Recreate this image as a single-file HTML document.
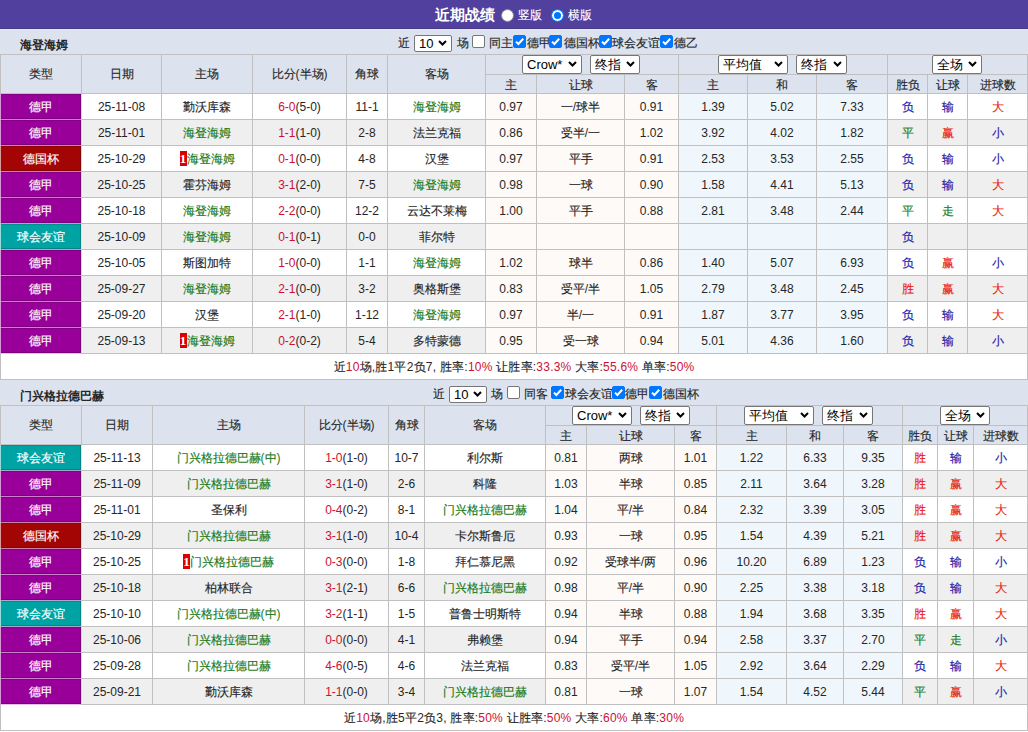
<!DOCTYPE html>
<html><head><meta charset="utf-8"><style>
html,body{margin:0;padding:0;}
body{width:1028px;height:732px;position:relative;overflow:hidden;background:#dce3ee;font-family:"Liberation Sans",sans-serif;font-size:12px;color:#262626;}
.a{position:absolute;}
.t{position:absolute;text-align:center;white-space:nowrap;}
.c{-webkit-text-stroke:0.15px currentColor;}
.sel{position:absolute;background:#fff;border:1px solid #767676;border-radius:2px;font-size:13px;color:#000;}
.sel span{position:absolute;left:4px;top:0;}
.sel svg{position:absolute;}
.cb{position:absolute;width:11px;height:11px;border:1px solid #767676;border-radius:2px;background:#fff;}
.cb.on{background:#0075ff;border-color:#0075ff;}
.cb svg{position:absolute;left:-1px;top:-1px;}
.rd{position:absolute;width:11px;height:11px;border-radius:50%;background:#fff;border:1px solid #888;}
.rd.on{background:#fff;border:1px solid #0075ff;box-shadow:inset 0 0 0 2px #fff,inset 0 0 0 6px #0075ff;}
.bd{display:inline-block;background:#dd0000;color:#fff;font-weight:bold;font-family:"Liberation Serif",serif;font-size:13px;width:7px;line-height:15px;height:15px;text-align:center;vertical-align:middle;margin-right:0px;position:relative;top:-1px;}
</style></head><body>
<div class="a" style="left:0px;top:0px;width:1028px;height:29px;background:#51409d;"></div>
<div class="a" style="left:0px;top:28px;width:1028px;height:1px;background:#483a86;"></div>
<div class="a" style="left:0px;top:29px;width:1028px;height:1px;background:#e6e6fa;"></div>
<div class="t" style="left:435px;top:4px;width:70px;height:22px;line-height:22px;color:#fff;font-weight:bold;font-size:15px;text-align:left;">近期战绩</div>
<div class="rd" style="left:501px;top:9px"></div>
<div class="t" style="left:518px;top:4px;width:30px;height:22px;line-height:22px;color:#fff;text-align:left;"><span class="c">竖版</span></div>
<div class="rd on" style="left:551px;top:9px"></div>
<div class="t" style="left:568px;top:4px;width:30px;height:22px;line-height:22px;color:#fff;text-align:left;"><span class="c">横版</span></div>
<div class="t" style="left:20px;top:35px;width:200px;height:20px;line-height:20px;font-weight:bold;text-align:left;">海登海姆</div>
<div class="t" style="left:398px;top:35px;width:120px;height:16px;line-height:16px;text-align:left;width:auto;"><span class="c">近</span></div>
<div class="sel" style="left:414px;top:35px;width:36px;height:15px;line-height:15px;"><span style="font-family:"Liberation Serif",serif;font-size:13px;">10</span><svg style="right:4px;top:4px" width="9" height="6" viewBox="0 0 9 6"><path d="M1 1 L4.5 4.5 L8 1" fill="none" stroke="#000" stroke-width="2"/></svg></div>
<div class="t" style="left:457px;top:35px;width:120px;height:16px;line-height:16px;text-align:left;width:auto;"><span class="c">场</span></div>
<div class="cb" style="left:472px;top:35px"></div>
<div class="t" style="left:489px;top:35px;width:120px;height:16px;line-height:16px;text-align:left;width:auto;"><span class="c">同主</span></div>
<div class="cb on" style="left:513px;top:35px"><svg width="13" height="13" viewBox="0 0 13 13"><path d="M3 6.6 L5.4 9 L10.2 3.8" fill="none" stroke="#fff" stroke-width="2"/></svg></div>
<div class="t" style="left:527px;top:35px;width:120px;height:16px;line-height:16px;text-align:left;width:auto;"><span class="c">德甲</span></div>
<div class="cb on" style="left:549px;top:35px"><svg width="13" height="13" viewBox="0 0 13 13"><path d="M3 6.6 L5.4 9 L10.2 3.8" fill="none" stroke="#fff" stroke-width="2"/></svg></div>
<div class="t" style="left:564px;top:35px;width:120px;height:16px;line-height:16px;text-align:left;width:auto;"><span class="c">德国杯</span></div>
<div class="cb on" style="left:599px;top:35px"><svg width="13" height="13" viewBox="0 0 13 13"><path d="M3 6.6 L5.4 9 L10.2 3.8" fill="none" stroke="#fff" stroke-width="2"/></svg></div>
<div class="t" style="left:612px;top:35px;width:120px;height:16px;line-height:16px;text-align:left;width:auto;"><span class="c">球会友谊</span></div>
<div class="cb on" style="left:660px;top:35px"><svg width="13" height="13" viewBox="0 0 13 13"><path d="M3 6.6 L5.4 9 L10.2 3.8" fill="none" stroke="#fff" stroke-width="2"/></svg></div>
<div class="t" style="left:674px;top:35px;width:120px;height:16px;line-height:16px;text-align:left;width:auto;"><span class="c">德乙</span></div>
<div class="a" style="left:0px;top:54px;width:1028px;height:326px;background:#c0c0c0;"></div>
<div class="a" style="left:1px;top:55px;width:80px;height:38px;background:#dce3ee;"></div>
<div class="a" style="left:82px;top:55px;width:79px;height:38px;background:#dce3ee;"></div>
<div class="a" style="left:162px;top:55px;width:90px;height:38px;background:#dce3ee;"></div>
<div class="a" style="left:253px;top:55px;width:93px;height:38px;background:#dce3ee;"></div>
<div class="a" style="left:347px;top:55px;width:40px;height:38px;background:#dce3ee;"></div>
<div class="a" style="left:388px;top:55px;width:97px;height:38px;background:#dce3ee;"></div>
<div class="a" style="left:486px;top:75px;width:50px;height:18px;background:#dce3ee;"></div>
<div class="a" style="left:537px;top:75px;width:87px;height:18px;background:#dce3ee;"></div>
<div class="a" style="left:625px;top:75px;width:53px;height:18px;background:#dce3ee;"></div>
<div class="a" style="left:679px;top:75px;width:68px;height:18px;background:#dce3ee;"></div>
<div class="a" style="left:748px;top:75px;width:68px;height:18px;background:#dce3ee;"></div>
<div class="a" style="left:817px;top:75px;width:70px;height:18px;background:#dce3ee;"></div>
<div class="a" style="left:888px;top:75px;width:39px;height:18px;background:#dce3ee;"></div>
<div class="a" style="left:928px;top:75px;width:39px;height:18px;background:#dce3ee;"></div>
<div class="a" style="left:968px;top:75px;width:59px;height:18px;background:#dce3ee;"></div>
<div class="a" style="left:486px;top:55px;width:192px;height:19px;background:#dce3ee;"></div>
<div class="a" style="left:679px;top:55px;width:208px;height:19px;background:#dce3ee;"></div>
<div class="a" style="left:888px;top:55px;width:139px;height:19px;background:#dce3ee;"></div>
<div class="t" style="left:1px;top:55px;width:80px;height:38px;line-height:38px;"><span class="c">类型</span></div>
<div class="t" style="left:82px;top:55px;width:79px;height:38px;line-height:38px;"><span class="c">日期</span></div>
<div class="t" style="left:162px;top:55px;width:90px;height:38px;line-height:38px;"><span class="c">主场</span></div>
<div class="t" style="left:253px;top:55px;width:93px;height:38px;line-height:38px;"><span class="c">比分</span>(<span class="c">半场</span>)</div>
<div class="t" style="left:347px;top:55px;width:40px;height:38px;line-height:38px;"><span class="c">角球</span></div>
<div class="t" style="left:388px;top:55px;width:97px;height:38px;line-height:38px;"><span class="c">客场</span></div>
<div class="t" style="left:486px;top:76px;width:50px;height:18px;line-height:18px;"><span class="c">主</span></div>
<div class="t" style="left:537px;top:76px;width:87px;height:18px;line-height:18px;"><span class="c">让球</span></div>
<div class="t" style="left:625px;top:76px;width:53px;height:18px;line-height:18px;"><span class="c">客</span></div>
<div class="t" style="left:679px;top:76px;width:68px;height:18px;line-height:18px;"><span class="c">主</span></div>
<div class="t" style="left:748px;top:76px;width:68px;height:18px;line-height:18px;"><span class="c">和</span></div>
<div class="t" style="left:817px;top:76px;width:70px;height:18px;line-height:18px;"><span class="c">客</span></div>
<div class="t" style="left:888px;top:76px;width:39px;height:18px;line-height:18px;"><span class="c">胜负</span></div>
<div class="t" style="left:928px;top:76px;width:39px;height:18px;line-height:18px;"><span class="c">让球</span></div>
<div class="t" style="left:968px;top:76px;width:59px;height:18px;line-height:18px;"><span class="c">进球数</span></div>
<div class="sel" style="left:522px;top:55px;width:58px;height:17px;line-height:17px;"><span style="">Crow*</span><svg style="right:4px;top:5px" width="9" height="6" viewBox="0 0 9 6"><path d="M1 1 L4.5 4.5 L8 1" fill="none" stroke="#000" stroke-width="2"/></svg></div>
<div class="sel" style="left:590px;top:55px;width:48px;height:17px;line-height:17px;"><span style="">终指</span><svg style="right:4px;top:5px" width="9" height="6" viewBox="0 0 9 6"><path d="M1 1 L4.5 4.5 L8 1" fill="none" stroke="#000" stroke-width="2"/></svg></div>
<div class="sel" style="left:718px;top:55px;width:68px;height:17px;line-height:17px;"><span style="">平均值</span><svg style="right:4px;top:5px" width="9" height="6" viewBox="0 0 9 6"><path d="M1 1 L4.5 4.5 L8 1" fill="none" stroke="#000" stroke-width="2"/></svg></div>
<div class="sel" style="left:796px;top:55px;width:49px;height:17px;line-height:17px;"><span style="">终指</span><svg style="right:4px;top:5px" width="9" height="6" viewBox="0 0 9 6"><path d="M1 1 L4.5 4.5 L8 1" fill="none" stroke="#000" stroke-width="2"/></svg></div>
<div class="sel" style="left:932px;top:55px;width:48px;height:17px;line-height:17px;"><span style="">全场</span><svg style="right:4px;top:5px" width="9" height="6" viewBox="0 0 9 6"><path d="M1 1 L4.5 4.5 L8 1" fill="none" stroke="#000" stroke-width="2"/></svg></div>
<div class="a" style="left:1px;top:94px;width:80px;height:25px;background:#990099;"></div>
<div class="a" style="left:82px;top:94px;width:79px;height:25px;background:#ffffff;"></div>
<div class="a" style="left:162px;top:94px;width:90px;height:25px;background:#ffffff;"></div>
<div class="a" style="left:253px;top:94px;width:93px;height:25px;background:#ffffff;"></div>
<div class="a" style="left:347px;top:94px;width:40px;height:25px;background:#ffffff;"></div>
<div class="a" style="left:388px;top:94px;width:97px;height:25px;background:#ffffff;"></div>
<div class="a" style="left:486px;top:94px;width:50px;height:25px;background:#fdfaf8;"></div>
<div class="a" style="left:537px;top:94px;width:87px;height:25px;background:#fdfaf8;"></div>
<div class="a" style="left:625px;top:94px;width:53px;height:25px;background:#fdfaf8;"></div>
<div class="a" style="left:679px;top:94px;width:68px;height:25px;background:#eff7fc;"></div>
<div class="a" style="left:748px;top:94px;width:68px;height:25px;background:#eff7fc;"></div>
<div class="a" style="left:817px;top:94px;width:70px;height:25px;background:#eff7fc;"></div>
<div class="a" style="left:888px;top:94px;width:39px;height:25px;background:#ffffff;"></div>
<div class="a" style="left:928px;top:94px;width:39px;height:25px;background:#ffffff;"></div>
<div class="a" style="left:968px;top:94px;width:59px;height:25px;background:#ffffff;"></div>
<div class="t" style="left:1px;top:95px;width:80px;height:25px;line-height:25px;color:#fff;"><span class="c">德甲</span></div>
<div class="t" style="left:82px;top:95px;width:79px;height:25px;line-height:25px;">25-11-08</div>
<div class="t" style="left:162px;top:95px;width:90px;height:25px;line-height:25px;"><span class="c">勤沃库森</span></div>
<div class="t" style="left:253px;top:95px;width:93px;height:25px;line-height:25px;"><span style="color:#cc1133">6-0</span>(5-0)</div>
<div class="t" style="left:347px;top:95px;width:40px;height:25px;line-height:25px;">11-1</div>
<div class="t" style="left:388px;top:95px;width:97px;height:25px;line-height:25px;color:#1a7a1a;"><span class="c">海登海姆</span></div>
<div class="t" style="left:486px;top:95px;width:50px;height:25px;line-height:25px;">0.97</div>
<div class="t" style="left:537px;top:95px;width:87px;height:25px;line-height:25px;"><span class="c">一</span>/<span class="c">球半</span></div>
<div class="t" style="left:625px;top:95px;width:53px;height:25px;line-height:25px;">0.91</div>
<div class="t" style="left:679px;top:95px;width:68px;height:25px;line-height:25px;">1.39</div>
<div class="t" style="left:748px;top:95px;width:68px;height:25px;line-height:25px;">5.02</div>
<div class="t" style="left:817px;top:95px;width:70px;height:25px;line-height:25px;">7.33</div>
<div class="t" style="left:888px;top:95px;width:39px;height:25px;line-height:25px;color:#1818a8;"><span class="c">负</span></div>
<div class="t" style="left:928px;top:95px;width:39px;height:25px;line-height:25px;color:#1818a8;"><span class="c">输</span></div>
<div class="t" style="left:968px;top:95px;width:59px;height:25px;line-height:25px;color:#e8200c;"><span class="c">大</span></div>
<div class="a" style="left:1px;top:120px;width:80px;height:25px;background:#990099;"></div>
<div class="a" style="left:82px;top:120px;width:79px;height:25px;background:#efefef;"></div>
<div class="a" style="left:162px;top:120px;width:90px;height:25px;background:#efefef;"></div>
<div class="a" style="left:253px;top:120px;width:93px;height:25px;background:#efefef;"></div>
<div class="a" style="left:347px;top:120px;width:40px;height:25px;background:#efefef;"></div>
<div class="a" style="left:388px;top:120px;width:97px;height:25px;background:#efefef;"></div>
<div class="a" style="left:486px;top:120px;width:50px;height:25px;background:#fdfaf8;"></div>
<div class="a" style="left:537px;top:120px;width:87px;height:25px;background:#fdfaf8;"></div>
<div class="a" style="left:625px;top:120px;width:53px;height:25px;background:#fdfaf8;"></div>
<div class="a" style="left:679px;top:120px;width:68px;height:25px;background:#eff7fc;"></div>
<div class="a" style="left:748px;top:120px;width:68px;height:25px;background:#eff7fc;"></div>
<div class="a" style="left:817px;top:120px;width:70px;height:25px;background:#eff7fc;"></div>
<div class="a" style="left:888px;top:120px;width:39px;height:25px;background:#efefef;"></div>
<div class="a" style="left:928px;top:120px;width:39px;height:25px;background:#efefef;"></div>
<div class="a" style="left:968px;top:120px;width:59px;height:25px;background:#efefef;"></div>
<div class="t" style="left:1px;top:121px;width:80px;height:25px;line-height:25px;color:#fff;"><span class="c">德甲</span></div>
<div class="t" style="left:82px;top:121px;width:79px;height:25px;line-height:25px;">25-11-01</div>
<div class="t" style="left:162px;top:121px;width:90px;height:25px;line-height:25px;color:#1a7a1a;"><span class="c">海登海姆</span></div>
<div class="t" style="left:253px;top:121px;width:93px;height:25px;line-height:25px;"><span style="color:#cc1133">1-1</span>(1-0)</div>
<div class="t" style="left:347px;top:121px;width:40px;height:25px;line-height:25px;">2-8</div>
<div class="t" style="left:388px;top:121px;width:97px;height:25px;line-height:25px;"><span class="c">法兰克福</span></div>
<div class="t" style="left:486px;top:121px;width:50px;height:25px;line-height:25px;">0.86</div>
<div class="t" style="left:537px;top:121px;width:87px;height:25px;line-height:25px;"><span class="c">受半</span>/<span class="c">一</span></div>
<div class="t" style="left:625px;top:121px;width:53px;height:25px;line-height:25px;">1.02</div>
<div class="t" style="left:679px;top:121px;width:68px;height:25px;line-height:25px;">3.92</div>
<div class="t" style="left:748px;top:121px;width:68px;height:25px;line-height:25px;">4.02</div>
<div class="t" style="left:817px;top:121px;width:70px;height:25px;line-height:25px;">1.82</div>
<div class="t" style="left:888px;top:121px;width:39px;height:25px;line-height:25px;color:#1a7a1a;"><span class="c">平</span></div>
<div class="t" style="left:928px;top:121px;width:39px;height:25px;line-height:25px;color:#e8200c;"><span class="c">赢</span></div>
<div class="t" style="left:968px;top:121px;width:59px;height:25px;line-height:25px;color:#1818a8;"><span class="c">小</span></div>
<div class="a" style="left:1px;top:146px;width:80px;height:25px;background:#a30505;"></div>
<div class="a" style="left:82px;top:146px;width:79px;height:25px;background:#ffffff;"></div>
<div class="a" style="left:162px;top:146px;width:90px;height:25px;background:#ffffff;"></div>
<div class="a" style="left:253px;top:146px;width:93px;height:25px;background:#ffffff;"></div>
<div class="a" style="left:347px;top:146px;width:40px;height:25px;background:#ffffff;"></div>
<div class="a" style="left:388px;top:146px;width:97px;height:25px;background:#ffffff;"></div>
<div class="a" style="left:486px;top:146px;width:50px;height:25px;background:#fdfaf8;"></div>
<div class="a" style="left:537px;top:146px;width:87px;height:25px;background:#fdfaf8;"></div>
<div class="a" style="left:625px;top:146px;width:53px;height:25px;background:#fdfaf8;"></div>
<div class="a" style="left:679px;top:146px;width:68px;height:25px;background:#eff7fc;"></div>
<div class="a" style="left:748px;top:146px;width:68px;height:25px;background:#eff7fc;"></div>
<div class="a" style="left:817px;top:146px;width:70px;height:25px;background:#eff7fc;"></div>
<div class="a" style="left:888px;top:146px;width:39px;height:25px;background:#ffffff;"></div>
<div class="a" style="left:928px;top:146px;width:39px;height:25px;background:#ffffff;"></div>
<div class="a" style="left:968px;top:146px;width:59px;height:25px;background:#ffffff;"></div>
<div class="t" style="left:1px;top:147px;width:80px;height:25px;line-height:25px;color:#fff;"><span class="c">德国杯</span></div>
<div class="t" style="left:82px;top:147px;width:79px;height:25px;line-height:25px;">25-10-29</div>
<div class="t" style="left:162px;top:147px;width:90px;height:25px;line-height:25px;color:#1a7a1a;"><b class="bd">1</b><span class="c">海登海姆</span></div>
<div class="t" style="left:253px;top:147px;width:93px;height:25px;line-height:25px;"><span style="color:#cc1133">0-1</span>(0-0)</div>
<div class="t" style="left:347px;top:147px;width:40px;height:25px;line-height:25px;">4-8</div>
<div class="t" style="left:388px;top:147px;width:97px;height:25px;line-height:25px;"><span class="c">汉堡</span></div>
<div class="t" style="left:486px;top:147px;width:50px;height:25px;line-height:25px;">0.97</div>
<div class="t" style="left:537px;top:147px;width:87px;height:25px;line-height:25px;"><span class="c">平手</span></div>
<div class="t" style="left:625px;top:147px;width:53px;height:25px;line-height:25px;">0.91</div>
<div class="t" style="left:679px;top:147px;width:68px;height:25px;line-height:25px;">2.53</div>
<div class="t" style="left:748px;top:147px;width:68px;height:25px;line-height:25px;">3.53</div>
<div class="t" style="left:817px;top:147px;width:70px;height:25px;line-height:25px;">2.55</div>
<div class="t" style="left:888px;top:147px;width:39px;height:25px;line-height:25px;color:#1818a8;"><span class="c">负</span></div>
<div class="t" style="left:928px;top:147px;width:39px;height:25px;line-height:25px;color:#1818a8;"><span class="c">输</span></div>
<div class="t" style="left:968px;top:147px;width:59px;height:25px;line-height:25px;color:#1818a8;"><span class="c">小</span></div>
<div class="a" style="left:1px;top:172px;width:80px;height:25px;background:#990099;"></div>
<div class="a" style="left:82px;top:172px;width:79px;height:25px;background:#efefef;"></div>
<div class="a" style="left:162px;top:172px;width:90px;height:25px;background:#efefef;"></div>
<div class="a" style="left:253px;top:172px;width:93px;height:25px;background:#efefef;"></div>
<div class="a" style="left:347px;top:172px;width:40px;height:25px;background:#efefef;"></div>
<div class="a" style="left:388px;top:172px;width:97px;height:25px;background:#efefef;"></div>
<div class="a" style="left:486px;top:172px;width:50px;height:25px;background:#fdfaf8;"></div>
<div class="a" style="left:537px;top:172px;width:87px;height:25px;background:#fdfaf8;"></div>
<div class="a" style="left:625px;top:172px;width:53px;height:25px;background:#fdfaf8;"></div>
<div class="a" style="left:679px;top:172px;width:68px;height:25px;background:#eff7fc;"></div>
<div class="a" style="left:748px;top:172px;width:68px;height:25px;background:#eff7fc;"></div>
<div class="a" style="left:817px;top:172px;width:70px;height:25px;background:#eff7fc;"></div>
<div class="a" style="left:888px;top:172px;width:39px;height:25px;background:#efefef;"></div>
<div class="a" style="left:928px;top:172px;width:39px;height:25px;background:#efefef;"></div>
<div class="a" style="left:968px;top:172px;width:59px;height:25px;background:#efefef;"></div>
<div class="t" style="left:1px;top:173px;width:80px;height:25px;line-height:25px;color:#fff;"><span class="c">德甲</span></div>
<div class="t" style="left:82px;top:173px;width:79px;height:25px;line-height:25px;">25-10-25</div>
<div class="t" style="left:162px;top:173px;width:90px;height:25px;line-height:25px;"><span class="c">霍芬海姆</span></div>
<div class="t" style="left:253px;top:173px;width:93px;height:25px;line-height:25px;"><span style="color:#cc1133">3-1</span>(2-0)</div>
<div class="t" style="left:347px;top:173px;width:40px;height:25px;line-height:25px;">7-5</div>
<div class="t" style="left:388px;top:173px;width:97px;height:25px;line-height:25px;color:#1a7a1a;"><span class="c">海登海姆</span></div>
<div class="t" style="left:486px;top:173px;width:50px;height:25px;line-height:25px;">0.98</div>
<div class="t" style="left:537px;top:173px;width:87px;height:25px;line-height:25px;"><span class="c">一球</span></div>
<div class="t" style="left:625px;top:173px;width:53px;height:25px;line-height:25px;">0.90</div>
<div class="t" style="left:679px;top:173px;width:68px;height:25px;line-height:25px;">1.58</div>
<div class="t" style="left:748px;top:173px;width:68px;height:25px;line-height:25px;">4.41</div>
<div class="t" style="left:817px;top:173px;width:70px;height:25px;line-height:25px;">5.13</div>
<div class="t" style="left:888px;top:173px;width:39px;height:25px;line-height:25px;color:#1818a8;"><span class="c">负</span></div>
<div class="t" style="left:928px;top:173px;width:39px;height:25px;line-height:25px;color:#1818a8;"><span class="c">输</span></div>
<div class="t" style="left:968px;top:173px;width:59px;height:25px;line-height:25px;color:#e8200c;"><span class="c">大</span></div>
<div class="a" style="left:1px;top:198px;width:80px;height:25px;background:#990099;"></div>
<div class="a" style="left:82px;top:198px;width:79px;height:25px;background:#ffffff;"></div>
<div class="a" style="left:162px;top:198px;width:90px;height:25px;background:#ffffff;"></div>
<div class="a" style="left:253px;top:198px;width:93px;height:25px;background:#ffffff;"></div>
<div class="a" style="left:347px;top:198px;width:40px;height:25px;background:#ffffff;"></div>
<div class="a" style="left:388px;top:198px;width:97px;height:25px;background:#ffffff;"></div>
<div class="a" style="left:486px;top:198px;width:50px;height:25px;background:#fdfaf8;"></div>
<div class="a" style="left:537px;top:198px;width:87px;height:25px;background:#fdfaf8;"></div>
<div class="a" style="left:625px;top:198px;width:53px;height:25px;background:#fdfaf8;"></div>
<div class="a" style="left:679px;top:198px;width:68px;height:25px;background:#eff7fc;"></div>
<div class="a" style="left:748px;top:198px;width:68px;height:25px;background:#eff7fc;"></div>
<div class="a" style="left:817px;top:198px;width:70px;height:25px;background:#eff7fc;"></div>
<div class="a" style="left:888px;top:198px;width:39px;height:25px;background:#ffffff;"></div>
<div class="a" style="left:928px;top:198px;width:39px;height:25px;background:#ffffff;"></div>
<div class="a" style="left:968px;top:198px;width:59px;height:25px;background:#ffffff;"></div>
<div class="t" style="left:1px;top:199px;width:80px;height:25px;line-height:25px;color:#fff;"><span class="c">德甲</span></div>
<div class="t" style="left:82px;top:199px;width:79px;height:25px;line-height:25px;">25-10-18</div>
<div class="t" style="left:162px;top:199px;width:90px;height:25px;line-height:25px;color:#1a7a1a;"><span class="c">海登海姆</span></div>
<div class="t" style="left:253px;top:199px;width:93px;height:25px;line-height:25px;"><span style="color:#cc1133">2-2</span>(0-0)</div>
<div class="t" style="left:347px;top:199px;width:40px;height:25px;line-height:25px;">12-2</div>
<div class="t" style="left:388px;top:199px;width:97px;height:25px;line-height:25px;"><span class="c">云达不莱梅</span></div>
<div class="t" style="left:486px;top:199px;width:50px;height:25px;line-height:25px;">1.00</div>
<div class="t" style="left:537px;top:199px;width:87px;height:25px;line-height:25px;"><span class="c">平手</span></div>
<div class="t" style="left:625px;top:199px;width:53px;height:25px;line-height:25px;">0.88</div>
<div class="t" style="left:679px;top:199px;width:68px;height:25px;line-height:25px;">2.81</div>
<div class="t" style="left:748px;top:199px;width:68px;height:25px;line-height:25px;">3.48</div>
<div class="t" style="left:817px;top:199px;width:70px;height:25px;line-height:25px;">2.44</div>
<div class="t" style="left:888px;top:199px;width:39px;height:25px;line-height:25px;color:#1a7a1a;"><span class="c">平</span></div>
<div class="t" style="left:928px;top:199px;width:39px;height:25px;line-height:25px;color:#1a7a1a;"><span class="c">走</span></div>
<div class="t" style="left:968px;top:199px;width:59px;height:25px;line-height:25px;color:#e8200c;"><span class="c">大</span></div>
<div class="a" style="left:1px;top:224px;width:80px;height:25px;background:#00a3a3;"></div>
<div class="a" style="left:82px;top:224px;width:79px;height:25px;background:#efefef;"></div>
<div class="a" style="left:162px;top:224px;width:90px;height:25px;background:#efefef;"></div>
<div class="a" style="left:253px;top:224px;width:93px;height:25px;background:#efefef;"></div>
<div class="a" style="left:347px;top:224px;width:40px;height:25px;background:#efefef;"></div>
<div class="a" style="left:388px;top:224px;width:97px;height:25px;background:#efefef;"></div>
<div class="a" style="left:486px;top:224px;width:50px;height:25px;background:#fdfaf8;"></div>
<div class="a" style="left:537px;top:224px;width:87px;height:25px;background:#fdfaf8;"></div>
<div class="a" style="left:625px;top:224px;width:53px;height:25px;background:#fdfaf8;"></div>
<div class="a" style="left:679px;top:224px;width:68px;height:25px;background:#eff7fc;"></div>
<div class="a" style="left:748px;top:224px;width:68px;height:25px;background:#eff7fc;"></div>
<div class="a" style="left:817px;top:224px;width:70px;height:25px;background:#eff7fc;"></div>
<div class="a" style="left:888px;top:224px;width:39px;height:25px;background:#efefef;"></div>
<div class="a" style="left:928px;top:224px;width:39px;height:25px;background:#efefef;"></div>
<div class="a" style="left:968px;top:224px;width:59px;height:25px;background:#efefef;"></div>
<div class="t" style="left:1px;top:225px;width:80px;height:25px;line-height:25px;color:#fff;"><span class="c">球会友谊</span></div>
<div class="t" style="left:82px;top:225px;width:79px;height:25px;line-height:25px;">25-10-09</div>
<div class="t" style="left:162px;top:225px;width:90px;height:25px;line-height:25px;color:#1a7a1a;"><span class="c">海登海姆</span></div>
<div class="t" style="left:253px;top:225px;width:93px;height:25px;line-height:25px;"><span style="color:#cc1133">0-1</span>(0-1)</div>
<div class="t" style="left:347px;top:225px;width:40px;height:25px;line-height:25px;">0-0</div>
<div class="t" style="left:388px;top:225px;width:97px;height:25px;line-height:25px;"><span class="c">菲尔特</span></div>
<div class="t" style="left:888px;top:225px;width:39px;height:25px;line-height:25px;color:#1818a8;"><span class="c">负</span></div>
<div class="a" style="left:1px;top:250px;width:80px;height:25px;background:#990099;"></div>
<div class="a" style="left:82px;top:250px;width:79px;height:25px;background:#ffffff;"></div>
<div class="a" style="left:162px;top:250px;width:90px;height:25px;background:#ffffff;"></div>
<div class="a" style="left:253px;top:250px;width:93px;height:25px;background:#ffffff;"></div>
<div class="a" style="left:347px;top:250px;width:40px;height:25px;background:#ffffff;"></div>
<div class="a" style="left:388px;top:250px;width:97px;height:25px;background:#ffffff;"></div>
<div class="a" style="left:486px;top:250px;width:50px;height:25px;background:#fdfaf8;"></div>
<div class="a" style="left:537px;top:250px;width:87px;height:25px;background:#fdfaf8;"></div>
<div class="a" style="left:625px;top:250px;width:53px;height:25px;background:#fdfaf8;"></div>
<div class="a" style="left:679px;top:250px;width:68px;height:25px;background:#eff7fc;"></div>
<div class="a" style="left:748px;top:250px;width:68px;height:25px;background:#eff7fc;"></div>
<div class="a" style="left:817px;top:250px;width:70px;height:25px;background:#eff7fc;"></div>
<div class="a" style="left:888px;top:250px;width:39px;height:25px;background:#ffffff;"></div>
<div class="a" style="left:928px;top:250px;width:39px;height:25px;background:#ffffff;"></div>
<div class="a" style="left:968px;top:250px;width:59px;height:25px;background:#ffffff;"></div>
<div class="t" style="left:1px;top:251px;width:80px;height:25px;line-height:25px;color:#fff;"><span class="c">德甲</span></div>
<div class="t" style="left:82px;top:251px;width:79px;height:25px;line-height:25px;">25-10-05</div>
<div class="t" style="left:162px;top:251px;width:90px;height:25px;line-height:25px;"><span class="c">斯图加特</span></div>
<div class="t" style="left:253px;top:251px;width:93px;height:25px;line-height:25px;"><span style="color:#cc1133">1-0</span>(0-0)</div>
<div class="t" style="left:347px;top:251px;width:40px;height:25px;line-height:25px;">1-1</div>
<div class="t" style="left:388px;top:251px;width:97px;height:25px;line-height:25px;color:#1a7a1a;"><span class="c">海登海姆</span></div>
<div class="t" style="left:486px;top:251px;width:50px;height:25px;line-height:25px;">1.02</div>
<div class="t" style="left:537px;top:251px;width:87px;height:25px;line-height:25px;"><span class="c">球半</span></div>
<div class="t" style="left:625px;top:251px;width:53px;height:25px;line-height:25px;">0.86</div>
<div class="t" style="left:679px;top:251px;width:68px;height:25px;line-height:25px;">1.40</div>
<div class="t" style="left:748px;top:251px;width:68px;height:25px;line-height:25px;">5.07</div>
<div class="t" style="left:817px;top:251px;width:70px;height:25px;line-height:25px;">6.93</div>
<div class="t" style="left:888px;top:251px;width:39px;height:25px;line-height:25px;color:#1818a8;"><span class="c">负</span></div>
<div class="t" style="left:928px;top:251px;width:39px;height:25px;line-height:25px;color:#e8200c;"><span class="c">赢</span></div>
<div class="t" style="left:968px;top:251px;width:59px;height:25px;line-height:25px;color:#1818a8;"><span class="c">小</span></div>
<div class="a" style="left:1px;top:276px;width:80px;height:25px;background:#990099;"></div>
<div class="a" style="left:82px;top:276px;width:79px;height:25px;background:#efefef;"></div>
<div class="a" style="left:162px;top:276px;width:90px;height:25px;background:#efefef;"></div>
<div class="a" style="left:253px;top:276px;width:93px;height:25px;background:#efefef;"></div>
<div class="a" style="left:347px;top:276px;width:40px;height:25px;background:#efefef;"></div>
<div class="a" style="left:388px;top:276px;width:97px;height:25px;background:#efefef;"></div>
<div class="a" style="left:486px;top:276px;width:50px;height:25px;background:#fdfaf8;"></div>
<div class="a" style="left:537px;top:276px;width:87px;height:25px;background:#fdfaf8;"></div>
<div class="a" style="left:625px;top:276px;width:53px;height:25px;background:#fdfaf8;"></div>
<div class="a" style="left:679px;top:276px;width:68px;height:25px;background:#eff7fc;"></div>
<div class="a" style="left:748px;top:276px;width:68px;height:25px;background:#eff7fc;"></div>
<div class="a" style="left:817px;top:276px;width:70px;height:25px;background:#eff7fc;"></div>
<div class="a" style="left:888px;top:276px;width:39px;height:25px;background:#efefef;"></div>
<div class="a" style="left:928px;top:276px;width:39px;height:25px;background:#efefef;"></div>
<div class="a" style="left:968px;top:276px;width:59px;height:25px;background:#efefef;"></div>
<div class="t" style="left:1px;top:277px;width:80px;height:25px;line-height:25px;color:#fff;"><span class="c">德甲</span></div>
<div class="t" style="left:82px;top:277px;width:79px;height:25px;line-height:25px;">25-09-27</div>
<div class="t" style="left:162px;top:277px;width:90px;height:25px;line-height:25px;color:#1a7a1a;"><span class="c">海登海姆</span></div>
<div class="t" style="left:253px;top:277px;width:93px;height:25px;line-height:25px;"><span style="color:#cc1133">2-1</span>(0-0)</div>
<div class="t" style="left:347px;top:277px;width:40px;height:25px;line-height:25px;">3-2</div>
<div class="t" style="left:388px;top:277px;width:97px;height:25px;line-height:25px;"><span class="c">奥格斯堡</span></div>
<div class="t" style="left:486px;top:277px;width:50px;height:25px;line-height:25px;">0.83</div>
<div class="t" style="left:537px;top:277px;width:87px;height:25px;line-height:25px;"><span class="c">受平</span>/<span class="c">半</span></div>
<div class="t" style="left:625px;top:277px;width:53px;height:25px;line-height:25px;">1.05</div>
<div class="t" style="left:679px;top:277px;width:68px;height:25px;line-height:25px;">2.79</div>
<div class="t" style="left:748px;top:277px;width:68px;height:25px;line-height:25px;">3.48</div>
<div class="t" style="left:817px;top:277px;width:70px;height:25px;line-height:25px;">2.45</div>
<div class="t" style="left:888px;top:277px;width:39px;height:25px;line-height:25px;color:#e8200c;"><span class="c">胜</span></div>
<div class="t" style="left:928px;top:277px;width:39px;height:25px;line-height:25px;color:#e8200c;"><span class="c">赢</span></div>
<div class="t" style="left:968px;top:277px;width:59px;height:25px;line-height:25px;color:#e8200c;"><span class="c">大</span></div>
<div class="a" style="left:1px;top:302px;width:80px;height:25px;background:#990099;"></div>
<div class="a" style="left:82px;top:302px;width:79px;height:25px;background:#ffffff;"></div>
<div class="a" style="left:162px;top:302px;width:90px;height:25px;background:#ffffff;"></div>
<div class="a" style="left:253px;top:302px;width:93px;height:25px;background:#ffffff;"></div>
<div class="a" style="left:347px;top:302px;width:40px;height:25px;background:#ffffff;"></div>
<div class="a" style="left:388px;top:302px;width:97px;height:25px;background:#ffffff;"></div>
<div class="a" style="left:486px;top:302px;width:50px;height:25px;background:#fdfaf8;"></div>
<div class="a" style="left:537px;top:302px;width:87px;height:25px;background:#fdfaf8;"></div>
<div class="a" style="left:625px;top:302px;width:53px;height:25px;background:#fdfaf8;"></div>
<div class="a" style="left:679px;top:302px;width:68px;height:25px;background:#eff7fc;"></div>
<div class="a" style="left:748px;top:302px;width:68px;height:25px;background:#eff7fc;"></div>
<div class="a" style="left:817px;top:302px;width:70px;height:25px;background:#eff7fc;"></div>
<div class="a" style="left:888px;top:302px;width:39px;height:25px;background:#ffffff;"></div>
<div class="a" style="left:928px;top:302px;width:39px;height:25px;background:#ffffff;"></div>
<div class="a" style="left:968px;top:302px;width:59px;height:25px;background:#ffffff;"></div>
<div class="t" style="left:1px;top:303px;width:80px;height:25px;line-height:25px;color:#fff;"><span class="c">德甲</span></div>
<div class="t" style="left:82px;top:303px;width:79px;height:25px;line-height:25px;">25-09-20</div>
<div class="t" style="left:162px;top:303px;width:90px;height:25px;line-height:25px;"><span class="c">汉堡</span></div>
<div class="t" style="left:253px;top:303px;width:93px;height:25px;line-height:25px;"><span style="color:#cc1133">2-1</span>(1-0)</div>
<div class="t" style="left:347px;top:303px;width:40px;height:25px;line-height:25px;">1-12</div>
<div class="t" style="left:388px;top:303px;width:97px;height:25px;line-height:25px;color:#1a7a1a;"><span class="c">海登海姆</span></div>
<div class="t" style="left:486px;top:303px;width:50px;height:25px;line-height:25px;">0.97</div>
<div class="t" style="left:537px;top:303px;width:87px;height:25px;line-height:25px;"><span class="c">半</span>/<span class="c">一</span></div>
<div class="t" style="left:625px;top:303px;width:53px;height:25px;line-height:25px;">0.91</div>
<div class="t" style="left:679px;top:303px;width:68px;height:25px;line-height:25px;">1.87</div>
<div class="t" style="left:748px;top:303px;width:68px;height:25px;line-height:25px;">3.77</div>
<div class="t" style="left:817px;top:303px;width:70px;height:25px;line-height:25px;">3.95</div>
<div class="t" style="left:888px;top:303px;width:39px;height:25px;line-height:25px;color:#1818a8;"><span class="c">负</span></div>
<div class="t" style="left:928px;top:303px;width:39px;height:25px;line-height:25px;color:#1818a8;"><span class="c">输</span></div>
<div class="t" style="left:968px;top:303px;width:59px;height:25px;line-height:25px;color:#e8200c;"><span class="c">大</span></div>
<div class="a" style="left:1px;top:328px;width:80px;height:25px;background:#990099;"></div>
<div class="a" style="left:82px;top:328px;width:79px;height:25px;background:#efefef;"></div>
<div class="a" style="left:162px;top:328px;width:90px;height:25px;background:#efefef;"></div>
<div class="a" style="left:253px;top:328px;width:93px;height:25px;background:#efefef;"></div>
<div class="a" style="left:347px;top:328px;width:40px;height:25px;background:#efefef;"></div>
<div class="a" style="left:388px;top:328px;width:97px;height:25px;background:#efefef;"></div>
<div class="a" style="left:486px;top:328px;width:50px;height:25px;background:#fdfaf8;"></div>
<div class="a" style="left:537px;top:328px;width:87px;height:25px;background:#fdfaf8;"></div>
<div class="a" style="left:625px;top:328px;width:53px;height:25px;background:#fdfaf8;"></div>
<div class="a" style="left:679px;top:328px;width:68px;height:25px;background:#eff7fc;"></div>
<div class="a" style="left:748px;top:328px;width:68px;height:25px;background:#eff7fc;"></div>
<div class="a" style="left:817px;top:328px;width:70px;height:25px;background:#eff7fc;"></div>
<div class="a" style="left:888px;top:328px;width:39px;height:25px;background:#efefef;"></div>
<div class="a" style="left:928px;top:328px;width:39px;height:25px;background:#efefef;"></div>
<div class="a" style="left:968px;top:328px;width:59px;height:25px;background:#efefef;"></div>
<div class="t" style="left:1px;top:329px;width:80px;height:25px;line-height:25px;color:#fff;"><span class="c">德甲</span></div>
<div class="t" style="left:82px;top:329px;width:79px;height:25px;line-height:25px;">25-09-13</div>
<div class="t" style="left:162px;top:329px;width:90px;height:25px;line-height:25px;color:#1a7a1a;"><b class="bd">1</b><span class="c">海登海姆</span></div>
<div class="t" style="left:253px;top:329px;width:93px;height:25px;line-height:25px;"><span style="color:#cc1133">0-2</span>(0-2)</div>
<div class="t" style="left:347px;top:329px;width:40px;height:25px;line-height:25px;">5-4</div>
<div class="t" style="left:388px;top:329px;width:97px;height:25px;line-height:25px;"><span class="c">多特蒙德</span></div>
<div class="t" style="left:486px;top:329px;width:50px;height:25px;line-height:25px;">0.95</div>
<div class="t" style="left:537px;top:329px;width:87px;height:25px;line-height:25px;"><span class="c">受一球</span></div>
<div class="t" style="left:625px;top:329px;width:53px;height:25px;line-height:25px;">0.94</div>
<div class="t" style="left:679px;top:329px;width:68px;height:25px;line-height:25px;">5.01</div>
<div class="t" style="left:748px;top:329px;width:68px;height:25px;line-height:25px;">4.36</div>
<div class="t" style="left:817px;top:329px;width:70px;height:25px;line-height:25px;">1.60</div>
<div class="t" style="left:888px;top:329px;width:39px;height:25px;line-height:25px;color:#1818a8;"><span class="c">负</span></div>
<div class="t" style="left:928px;top:329px;width:39px;height:25px;line-height:25px;color:#1818a8;"><span class="c">输</span></div>
<div class="t" style="left:968px;top:329px;width:59px;height:25px;line-height:25px;color:#1818a8;"><span class="c">小</span></div>
<div class="a" style="left:81px;top:94px;width:1px;height:25px;background:#ebcceb;"></div>
<div class="a" style="left:0px;top:94px;width:1px;height:25px;background:#d699d6;"></div>
<div class="a" style="left:1px;top:119px;width:80px;height:1px;background:#cc80cc;"></div>
<div class="a" style="left:1px;top:94px;width:80px;height:25px;box-shadow:inset -1px -1px 0 rgba(0,0,0,0.18), inset 0 1px 0 rgba(0,0,0,0.12);"></div>
<div class="a" style="left:81px;top:120px;width:1px;height:25px;background:#ebcceb;"></div>
<div class="a" style="left:0px;top:120px;width:1px;height:25px;background:#d699d6;"></div>
<div class="a" style="left:1px;top:145px;width:80px;height:1px;background:#ce80a7;"></div>
<div class="a" style="left:1px;top:120px;width:80px;height:25px;box-shadow:inset -1px -1px 0 rgba(0,0,0,0.18), inset 0 1px 0 rgba(0,0,0,0.12);"></div>
<div class="a" style="left:81px;top:146px;width:1px;height:25px;background:#edcdcd;"></div>
<div class="a" style="left:0px;top:146px;width:1px;height:25px;background:#da9b9b;"></div>
<div class="a" style="left:1px;top:171px;width:80px;height:1px;background:#ce80a7;"></div>
<div class="a" style="left:1px;top:146px;width:80px;height:25px;box-shadow:inset -1px -1px 0 rgba(0,0,0,0.18), inset 0 1px 0 rgba(0,0,0,0.12);"></div>
<div class="a" style="left:81px;top:172px;width:1px;height:25px;background:#ebcceb;"></div>
<div class="a" style="left:0px;top:172px;width:1px;height:25px;background:#d699d6;"></div>
<div class="a" style="left:1px;top:197px;width:80px;height:1px;background:#cc80cc;"></div>
<div class="a" style="left:1px;top:172px;width:80px;height:25px;box-shadow:inset -1px -1px 0 rgba(0,0,0,0.18), inset 0 1px 0 rgba(0,0,0,0.12);"></div>
<div class="a" style="left:81px;top:198px;width:1px;height:25px;background:#ebcceb;"></div>
<div class="a" style="left:0px;top:198px;width:1px;height:25px;background:#d699d6;"></div>
<div class="a" style="left:1px;top:223px;width:80px;height:1px;background:#a6a8ce;"></div>
<div class="a" style="left:1px;top:198px;width:80px;height:25px;box-shadow:inset -1px -1px 0 rgba(0,0,0,0.18), inset 0 1px 0 rgba(0,0,0,0.12);"></div>
<div class="a" style="left:81px;top:224px;width:1px;height:25px;background:#cceded;"></div>
<div class="a" style="left:0px;top:224px;width:1px;height:25px;background:#99dada;"></div>
<div class="a" style="left:1px;top:249px;width:80px;height:1px;background:#a6a8ce;"></div>
<div class="a" style="left:1px;top:224px;width:80px;height:25px;box-shadow:inset -1px -1px 0 rgba(0,0,0,0.18), inset 0 1px 0 rgba(0,0,0,0.12);"></div>
<div class="a" style="left:81px;top:250px;width:1px;height:25px;background:#ebcceb;"></div>
<div class="a" style="left:0px;top:250px;width:1px;height:25px;background:#d699d6;"></div>
<div class="a" style="left:1px;top:275px;width:80px;height:1px;background:#cc80cc;"></div>
<div class="a" style="left:1px;top:250px;width:80px;height:25px;box-shadow:inset -1px -1px 0 rgba(0,0,0,0.18), inset 0 1px 0 rgba(0,0,0,0.12);"></div>
<div class="a" style="left:81px;top:276px;width:1px;height:25px;background:#ebcceb;"></div>
<div class="a" style="left:0px;top:276px;width:1px;height:25px;background:#d699d6;"></div>
<div class="a" style="left:1px;top:301px;width:80px;height:1px;background:#cc80cc;"></div>
<div class="a" style="left:1px;top:276px;width:80px;height:25px;box-shadow:inset -1px -1px 0 rgba(0,0,0,0.18), inset 0 1px 0 rgba(0,0,0,0.12);"></div>
<div class="a" style="left:81px;top:302px;width:1px;height:25px;background:#ebcceb;"></div>
<div class="a" style="left:0px;top:302px;width:1px;height:25px;background:#d699d6;"></div>
<div class="a" style="left:1px;top:327px;width:80px;height:1px;background:#cc80cc;"></div>
<div class="a" style="left:1px;top:302px;width:80px;height:25px;box-shadow:inset -1px -1px 0 rgba(0,0,0,0.18), inset 0 1px 0 rgba(0,0,0,0.12);"></div>
<div class="a" style="left:81px;top:328px;width:1px;height:25px;background:#ebcceb;"></div>
<div class="a" style="left:0px;top:328px;width:1px;height:25px;background:#d699d6;"></div>
<div class="a" style="left:1px;top:353px;width:80px;height:1px;background:#e6bfe6;"></div>
<div class="a" style="left:1px;top:328px;width:80px;height:25px;box-shadow:inset -1px -1px 0 rgba(0,0,0,0.18), inset 0 1px 0 rgba(0,0,0,0.12);"></div>
<div class="a" style="left:1px;top:354px;width:1026px;height:25px;background:#ffffff;"></div>
<div class="t" style="left:1px;top:355px;width:1026px;height:25px;line-height:25px;letter-spacing:0.22px;"><span class="c">近</span><span style="color:#cc1133">10</span><span class="c">场</span>,<span class="c">胜</span>1<span class="c">平</span>2<span class="c">负</span>7, <span class="c">胜率</span>:<span style="color:#cc1133">10%</span> <span class="c">让胜率</span>:<span style="color:#cc1133">33.3%</span> <span class="c">大率</span>:<span style="color:#cc1133">55.6%</span> <span class="c">单率</span>:<span style="color:#cc1133">50%</span></div>
<div class="t" style="left:20px;top:386px;width:200px;height:20px;line-height:20px;font-weight:bold;text-align:left;">门兴格拉德巴赫</div>
<div class="t" style="left:433px;top:386px;width:120px;height:16px;line-height:16px;text-align:left;width:auto;"><span class="c">近</span></div>
<div class="sel" style="left:449px;top:386px;width:36px;height:15px;line-height:15px;"><span style="font-family:"Liberation Serif",serif;font-size:13px;">10</span><svg style="right:4px;top:4px" width="9" height="6" viewBox="0 0 9 6"><path d="M1 1 L4.5 4.5 L8 1" fill="none" stroke="#000" stroke-width="2"/></svg></div>
<div class="t" style="left:491px;top:386px;width:120px;height:16px;line-height:16px;text-align:left;width:auto;"><span class="c">场</span></div>
<div class="cb" style="left:507px;top:386px"></div>
<div class="t" style="left:524px;top:386px;width:120px;height:16px;line-height:16px;text-align:left;width:auto;"><span class="c">同客</span></div>
<div class="cb on" style="left:551px;top:386px"><svg width="13" height="13" viewBox="0 0 13 13"><path d="M3 6.6 L5.4 9 L10.2 3.8" fill="none" stroke="#fff" stroke-width="2"/></svg></div>
<div class="t" style="left:565px;top:386px;width:120px;height:16px;line-height:16px;text-align:left;width:auto;"><span class="c">球会友谊</span></div>
<div class="cb on" style="left:612px;top:386px"><svg width="13" height="13" viewBox="0 0 13 13"><path d="M3 6.6 L5.4 9 L10.2 3.8" fill="none" stroke="#fff" stroke-width="2"/></svg></div>
<div class="t" style="left:625px;top:386px;width:120px;height:16px;line-height:16px;text-align:left;width:auto;"><span class="c">德甲</span></div>
<div class="cb on" style="left:649px;top:386px"><svg width="13" height="13" viewBox="0 0 13 13"><path d="M3 6.6 L5.4 9 L10.2 3.8" fill="none" stroke="#fff" stroke-width="2"/></svg></div>
<div class="t" style="left:663px;top:386px;width:120px;height:16px;line-height:16px;text-align:left;width:auto;"><span class="c">德国杯</span></div>
<div class="a" style="left:0px;top:405px;width:1028px;height:326px;background:#c0c0c0;"></div>
<div class="a" style="left:1px;top:406px;width:80px;height:38px;background:#dce3ee;"></div>
<div class="a" style="left:82px;top:406px;width:70px;height:38px;background:#dce3ee;"></div>
<div class="a" style="left:153px;top:406px;width:151px;height:38px;background:#dce3ee;"></div>
<div class="a" style="left:305px;top:406px;width:83px;height:38px;background:#dce3ee;"></div>
<div class="a" style="left:389px;top:406px;width:35px;height:38px;background:#dce3ee;"></div>
<div class="a" style="left:425px;top:406px;width:120px;height:38px;background:#dce3ee;"></div>
<div class="a" style="left:546px;top:426px;width:40px;height:18px;background:#dce3ee;"></div>
<div class="a" style="left:587px;top:426px;width:87px;height:18px;background:#dce3ee;"></div>
<div class="a" style="left:675px;top:426px;width:41px;height:18px;background:#dce3ee;"></div>
<div class="a" style="left:717px;top:426px;width:69px;height:18px;background:#dce3ee;"></div>
<div class="a" style="left:787px;top:426px;width:56px;height:18px;background:#dce3ee;"></div>
<div class="a" style="left:844px;top:426px;width:58px;height:18px;background:#dce3ee;"></div>
<div class="a" style="left:903px;top:426px;width:34px;height:18px;background:#dce3ee;"></div>
<div class="a" style="left:938px;top:426px;width:35px;height:18px;background:#dce3ee;"></div>
<div class="a" style="left:974px;top:426px;width:53px;height:18px;background:#dce3ee;"></div>
<div class="a" style="left:546px;top:406px;width:170px;height:19px;background:#dce3ee;"></div>
<div class="a" style="left:717px;top:406px;width:185px;height:19px;background:#dce3ee;"></div>
<div class="a" style="left:903px;top:406px;width:124px;height:19px;background:#dce3ee;"></div>
<div class="t" style="left:1px;top:406px;width:80px;height:38px;line-height:38px;"><span class="c">类型</span></div>
<div class="t" style="left:82px;top:406px;width:70px;height:38px;line-height:38px;"><span class="c">日期</span></div>
<div class="t" style="left:153px;top:406px;width:151px;height:38px;line-height:38px;"><span class="c">主场</span></div>
<div class="t" style="left:305px;top:406px;width:83px;height:38px;line-height:38px;"><span class="c">比分</span>(<span class="c">半场</span>)</div>
<div class="t" style="left:389px;top:406px;width:35px;height:38px;line-height:38px;"><span class="c">角球</span></div>
<div class="t" style="left:425px;top:406px;width:120px;height:38px;line-height:38px;"><span class="c">客场</span></div>
<div class="t" style="left:546px;top:427px;width:40px;height:18px;line-height:18px;"><span class="c">主</span></div>
<div class="t" style="left:587px;top:427px;width:87px;height:18px;line-height:18px;"><span class="c">让球</span></div>
<div class="t" style="left:675px;top:427px;width:41px;height:18px;line-height:18px;"><span class="c">客</span></div>
<div class="t" style="left:717px;top:427px;width:69px;height:18px;line-height:18px;"><span class="c">主</span></div>
<div class="t" style="left:787px;top:427px;width:56px;height:18px;line-height:18px;"><span class="c">和</span></div>
<div class="t" style="left:844px;top:427px;width:58px;height:18px;line-height:18px;"><span class="c">客</span></div>
<div class="t" style="left:903px;top:427px;width:34px;height:18px;line-height:18px;"><span class="c">胜负</span></div>
<div class="t" style="left:938px;top:427px;width:35px;height:18px;line-height:18px;"><span class="c">让球</span></div>
<div class="t" style="left:974px;top:427px;width:53px;height:18px;line-height:18px;"><span class="c">进球数</span></div>
<div class="sel" style="left:572px;top:406px;width:58px;height:17px;line-height:17px;"><span style="">Crow*</span><svg style="right:4px;top:5px" width="9" height="6" viewBox="0 0 9 6"><path d="M1 1 L4.5 4.5 L8 1" fill="none" stroke="#000" stroke-width="2"/></svg></div>
<div class="sel" style="left:640px;top:406px;width:48px;height:17px;line-height:17px;"><span style="">终指</span><svg style="right:4px;top:5px" width="9" height="6" viewBox="0 0 9 6"><path d="M1 1 L4.5 4.5 L8 1" fill="none" stroke="#000" stroke-width="2"/></svg></div>
<div class="sel" style="left:744px;top:406px;width:68px;height:17px;line-height:17px;"><span style="">平均值</span><svg style="right:4px;top:5px" width="9" height="6" viewBox="0 0 9 6"><path d="M1 1 L4.5 4.5 L8 1" fill="none" stroke="#000" stroke-width="2"/></svg></div>
<div class="sel" style="left:822px;top:406px;width:49px;height:17px;line-height:17px;"><span style="">终指</span><svg style="right:4px;top:5px" width="9" height="6" viewBox="0 0 9 6"><path d="M1 1 L4.5 4.5 L8 1" fill="none" stroke="#000" stroke-width="2"/></svg></div>
<div class="sel" style="left:940px;top:406px;width:48px;height:17px;line-height:17px;"><span style="">全场</span><svg style="right:4px;top:5px" width="9" height="6" viewBox="0 0 9 6"><path d="M1 1 L4.5 4.5 L8 1" fill="none" stroke="#000" stroke-width="2"/></svg></div>
<div class="a" style="left:1px;top:445px;width:80px;height:25px;background:#00a3a3;"></div>
<div class="a" style="left:82px;top:445px;width:70px;height:25px;background:#ffffff;"></div>
<div class="a" style="left:153px;top:445px;width:151px;height:25px;background:#ffffff;"></div>
<div class="a" style="left:305px;top:445px;width:83px;height:25px;background:#ffffff;"></div>
<div class="a" style="left:389px;top:445px;width:35px;height:25px;background:#ffffff;"></div>
<div class="a" style="left:425px;top:445px;width:120px;height:25px;background:#ffffff;"></div>
<div class="a" style="left:546px;top:445px;width:40px;height:25px;background:#fdfaf8;"></div>
<div class="a" style="left:587px;top:445px;width:87px;height:25px;background:#fdfaf8;"></div>
<div class="a" style="left:675px;top:445px;width:41px;height:25px;background:#fdfaf8;"></div>
<div class="a" style="left:717px;top:445px;width:69px;height:25px;background:#eff7fc;"></div>
<div class="a" style="left:787px;top:445px;width:56px;height:25px;background:#eff7fc;"></div>
<div class="a" style="left:844px;top:445px;width:58px;height:25px;background:#eff7fc;"></div>
<div class="a" style="left:903px;top:445px;width:34px;height:25px;background:#ffffff;"></div>
<div class="a" style="left:938px;top:445px;width:35px;height:25px;background:#ffffff;"></div>
<div class="a" style="left:974px;top:445px;width:53px;height:25px;background:#ffffff;"></div>
<div class="t" style="left:1px;top:446px;width:80px;height:25px;line-height:25px;color:#fff;"><span class="c">球会友谊</span></div>
<div class="t" style="left:82px;top:446px;width:70px;height:25px;line-height:25px;">25-11-13</div>
<div class="t" style="left:153px;top:446px;width:151px;height:25px;line-height:25px;color:#1a7a1a;"><span class="c">门兴格拉德巴赫</span>(<span class="c">中</span>)</div>
<div class="t" style="left:305px;top:446px;width:83px;height:25px;line-height:25px;"><span style="color:#cc1133">1-0</span>(1-0)</div>
<div class="t" style="left:389px;top:446px;width:35px;height:25px;line-height:25px;">10-7</div>
<div class="t" style="left:425px;top:446px;width:120px;height:25px;line-height:25px;"><span class="c">利尔斯</span></div>
<div class="t" style="left:546px;top:446px;width:40px;height:25px;line-height:25px;">0.81</div>
<div class="t" style="left:587px;top:446px;width:87px;height:25px;line-height:25px;"><span class="c">两球</span></div>
<div class="t" style="left:675px;top:446px;width:41px;height:25px;line-height:25px;">1.01</div>
<div class="t" style="left:717px;top:446px;width:69px;height:25px;line-height:25px;">1.22</div>
<div class="t" style="left:787px;top:446px;width:56px;height:25px;line-height:25px;">6.33</div>
<div class="t" style="left:844px;top:446px;width:58px;height:25px;line-height:25px;">9.35</div>
<div class="t" style="left:903px;top:446px;width:34px;height:25px;line-height:25px;color:#e8200c;"><span class="c">胜</span></div>
<div class="t" style="left:938px;top:446px;width:35px;height:25px;line-height:25px;color:#1818a8;"><span class="c">输</span></div>
<div class="t" style="left:974px;top:446px;width:53px;height:25px;line-height:25px;color:#1818a8;"><span class="c">小</span></div>
<div class="a" style="left:1px;top:471px;width:80px;height:25px;background:#990099;"></div>
<div class="a" style="left:82px;top:471px;width:70px;height:25px;background:#efefef;"></div>
<div class="a" style="left:153px;top:471px;width:151px;height:25px;background:#efefef;"></div>
<div class="a" style="left:305px;top:471px;width:83px;height:25px;background:#efefef;"></div>
<div class="a" style="left:389px;top:471px;width:35px;height:25px;background:#efefef;"></div>
<div class="a" style="left:425px;top:471px;width:120px;height:25px;background:#efefef;"></div>
<div class="a" style="left:546px;top:471px;width:40px;height:25px;background:#fdfaf8;"></div>
<div class="a" style="left:587px;top:471px;width:87px;height:25px;background:#fdfaf8;"></div>
<div class="a" style="left:675px;top:471px;width:41px;height:25px;background:#fdfaf8;"></div>
<div class="a" style="left:717px;top:471px;width:69px;height:25px;background:#eff7fc;"></div>
<div class="a" style="left:787px;top:471px;width:56px;height:25px;background:#eff7fc;"></div>
<div class="a" style="left:844px;top:471px;width:58px;height:25px;background:#eff7fc;"></div>
<div class="a" style="left:903px;top:471px;width:34px;height:25px;background:#efefef;"></div>
<div class="a" style="left:938px;top:471px;width:35px;height:25px;background:#efefef;"></div>
<div class="a" style="left:974px;top:471px;width:53px;height:25px;background:#efefef;"></div>
<div class="t" style="left:1px;top:472px;width:80px;height:25px;line-height:25px;color:#fff;"><span class="c">德甲</span></div>
<div class="t" style="left:82px;top:472px;width:70px;height:25px;line-height:25px;">25-11-09</div>
<div class="t" style="left:153px;top:472px;width:151px;height:25px;line-height:25px;color:#1a7a1a;"><span class="c">门兴格拉德巴赫</span></div>
<div class="t" style="left:305px;top:472px;width:83px;height:25px;line-height:25px;"><span style="color:#cc1133">3-1</span>(1-0)</div>
<div class="t" style="left:389px;top:472px;width:35px;height:25px;line-height:25px;">2-6</div>
<div class="t" style="left:425px;top:472px;width:120px;height:25px;line-height:25px;"><span class="c">科隆</span></div>
<div class="t" style="left:546px;top:472px;width:40px;height:25px;line-height:25px;">1.03</div>
<div class="t" style="left:587px;top:472px;width:87px;height:25px;line-height:25px;"><span class="c">半球</span></div>
<div class="t" style="left:675px;top:472px;width:41px;height:25px;line-height:25px;">0.85</div>
<div class="t" style="left:717px;top:472px;width:69px;height:25px;line-height:25px;">2.11</div>
<div class="t" style="left:787px;top:472px;width:56px;height:25px;line-height:25px;">3.64</div>
<div class="t" style="left:844px;top:472px;width:58px;height:25px;line-height:25px;">3.28</div>
<div class="t" style="left:903px;top:472px;width:34px;height:25px;line-height:25px;color:#e8200c;"><span class="c">胜</span></div>
<div class="t" style="left:938px;top:472px;width:35px;height:25px;line-height:25px;color:#e8200c;"><span class="c">赢</span></div>
<div class="t" style="left:974px;top:472px;width:53px;height:25px;line-height:25px;color:#e8200c;"><span class="c">大</span></div>
<div class="a" style="left:1px;top:497px;width:80px;height:25px;background:#990099;"></div>
<div class="a" style="left:82px;top:497px;width:70px;height:25px;background:#ffffff;"></div>
<div class="a" style="left:153px;top:497px;width:151px;height:25px;background:#ffffff;"></div>
<div class="a" style="left:305px;top:497px;width:83px;height:25px;background:#ffffff;"></div>
<div class="a" style="left:389px;top:497px;width:35px;height:25px;background:#ffffff;"></div>
<div class="a" style="left:425px;top:497px;width:120px;height:25px;background:#ffffff;"></div>
<div class="a" style="left:546px;top:497px;width:40px;height:25px;background:#fdfaf8;"></div>
<div class="a" style="left:587px;top:497px;width:87px;height:25px;background:#fdfaf8;"></div>
<div class="a" style="left:675px;top:497px;width:41px;height:25px;background:#fdfaf8;"></div>
<div class="a" style="left:717px;top:497px;width:69px;height:25px;background:#eff7fc;"></div>
<div class="a" style="left:787px;top:497px;width:56px;height:25px;background:#eff7fc;"></div>
<div class="a" style="left:844px;top:497px;width:58px;height:25px;background:#eff7fc;"></div>
<div class="a" style="left:903px;top:497px;width:34px;height:25px;background:#ffffff;"></div>
<div class="a" style="left:938px;top:497px;width:35px;height:25px;background:#ffffff;"></div>
<div class="a" style="left:974px;top:497px;width:53px;height:25px;background:#ffffff;"></div>
<div class="t" style="left:1px;top:498px;width:80px;height:25px;line-height:25px;color:#fff;"><span class="c">德甲</span></div>
<div class="t" style="left:82px;top:498px;width:70px;height:25px;line-height:25px;">25-11-01</div>
<div class="t" style="left:153px;top:498px;width:151px;height:25px;line-height:25px;"><span class="c">圣保利</span></div>
<div class="t" style="left:305px;top:498px;width:83px;height:25px;line-height:25px;"><span style="color:#cc1133">0-4</span>(0-2)</div>
<div class="t" style="left:389px;top:498px;width:35px;height:25px;line-height:25px;">8-1</div>
<div class="t" style="left:425px;top:498px;width:120px;height:25px;line-height:25px;color:#1a7a1a;"><span class="c">门兴格拉德巴赫</span></div>
<div class="t" style="left:546px;top:498px;width:40px;height:25px;line-height:25px;">1.04</div>
<div class="t" style="left:587px;top:498px;width:87px;height:25px;line-height:25px;"><span class="c">平</span>/<span class="c">半</span></div>
<div class="t" style="left:675px;top:498px;width:41px;height:25px;line-height:25px;">0.84</div>
<div class="t" style="left:717px;top:498px;width:69px;height:25px;line-height:25px;">2.32</div>
<div class="t" style="left:787px;top:498px;width:56px;height:25px;line-height:25px;">3.39</div>
<div class="t" style="left:844px;top:498px;width:58px;height:25px;line-height:25px;">3.05</div>
<div class="t" style="left:903px;top:498px;width:34px;height:25px;line-height:25px;color:#e8200c;"><span class="c">胜</span></div>
<div class="t" style="left:938px;top:498px;width:35px;height:25px;line-height:25px;color:#e8200c;"><span class="c">赢</span></div>
<div class="t" style="left:974px;top:498px;width:53px;height:25px;line-height:25px;color:#e8200c;"><span class="c">大</span></div>
<div class="a" style="left:1px;top:523px;width:80px;height:25px;background:#a30505;"></div>
<div class="a" style="left:82px;top:523px;width:70px;height:25px;background:#efefef;"></div>
<div class="a" style="left:153px;top:523px;width:151px;height:25px;background:#efefef;"></div>
<div class="a" style="left:305px;top:523px;width:83px;height:25px;background:#efefef;"></div>
<div class="a" style="left:389px;top:523px;width:35px;height:25px;background:#efefef;"></div>
<div class="a" style="left:425px;top:523px;width:120px;height:25px;background:#efefef;"></div>
<div class="a" style="left:546px;top:523px;width:40px;height:25px;background:#fdfaf8;"></div>
<div class="a" style="left:587px;top:523px;width:87px;height:25px;background:#fdfaf8;"></div>
<div class="a" style="left:675px;top:523px;width:41px;height:25px;background:#fdfaf8;"></div>
<div class="a" style="left:717px;top:523px;width:69px;height:25px;background:#eff7fc;"></div>
<div class="a" style="left:787px;top:523px;width:56px;height:25px;background:#eff7fc;"></div>
<div class="a" style="left:844px;top:523px;width:58px;height:25px;background:#eff7fc;"></div>
<div class="a" style="left:903px;top:523px;width:34px;height:25px;background:#efefef;"></div>
<div class="a" style="left:938px;top:523px;width:35px;height:25px;background:#efefef;"></div>
<div class="a" style="left:974px;top:523px;width:53px;height:25px;background:#efefef;"></div>
<div class="t" style="left:1px;top:524px;width:80px;height:25px;line-height:25px;color:#fff;"><span class="c">德国杯</span></div>
<div class="t" style="left:82px;top:524px;width:70px;height:25px;line-height:25px;">25-10-29</div>
<div class="t" style="left:153px;top:524px;width:151px;height:25px;line-height:25px;color:#1a7a1a;"><span class="c">门兴格拉德巴赫</span></div>
<div class="t" style="left:305px;top:524px;width:83px;height:25px;line-height:25px;"><span style="color:#cc1133">3-1</span>(1-0)</div>
<div class="t" style="left:389px;top:524px;width:35px;height:25px;line-height:25px;">10-4</div>
<div class="t" style="left:425px;top:524px;width:120px;height:25px;line-height:25px;"><span class="c">卡尔斯鲁厄</span></div>
<div class="t" style="left:546px;top:524px;width:40px;height:25px;line-height:25px;">0.93</div>
<div class="t" style="left:587px;top:524px;width:87px;height:25px;line-height:25px;"><span class="c">一球</span></div>
<div class="t" style="left:675px;top:524px;width:41px;height:25px;line-height:25px;">0.95</div>
<div class="t" style="left:717px;top:524px;width:69px;height:25px;line-height:25px;">1.54</div>
<div class="t" style="left:787px;top:524px;width:56px;height:25px;line-height:25px;">4.39</div>
<div class="t" style="left:844px;top:524px;width:58px;height:25px;line-height:25px;">5.21</div>
<div class="t" style="left:903px;top:524px;width:34px;height:25px;line-height:25px;color:#e8200c;"><span class="c">胜</span></div>
<div class="t" style="left:938px;top:524px;width:35px;height:25px;line-height:25px;color:#e8200c;"><span class="c">赢</span></div>
<div class="t" style="left:974px;top:524px;width:53px;height:25px;line-height:25px;color:#e8200c;"><span class="c">大</span></div>
<div class="a" style="left:1px;top:549px;width:80px;height:25px;background:#990099;"></div>
<div class="a" style="left:82px;top:549px;width:70px;height:25px;background:#ffffff;"></div>
<div class="a" style="left:153px;top:549px;width:151px;height:25px;background:#ffffff;"></div>
<div class="a" style="left:305px;top:549px;width:83px;height:25px;background:#ffffff;"></div>
<div class="a" style="left:389px;top:549px;width:35px;height:25px;background:#ffffff;"></div>
<div class="a" style="left:425px;top:549px;width:120px;height:25px;background:#ffffff;"></div>
<div class="a" style="left:546px;top:549px;width:40px;height:25px;background:#fdfaf8;"></div>
<div class="a" style="left:587px;top:549px;width:87px;height:25px;background:#fdfaf8;"></div>
<div class="a" style="left:675px;top:549px;width:41px;height:25px;background:#fdfaf8;"></div>
<div class="a" style="left:717px;top:549px;width:69px;height:25px;background:#eff7fc;"></div>
<div class="a" style="left:787px;top:549px;width:56px;height:25px;background:#eff7fc;"></div>
<div class="a" style="left:844px;top:549px;width:58px;height:25px;background:#eff7fc;"></div>
<div class="a" style="left:903px;top:549px;width:34px;height:25px;background:#ffffff;"></div>
<div class="a" style="left:938px;top:549px;width:35px;height:25px;background:#ffffff;"></div>
<div class="a" style="left:974px;top:549px;width:53px;height:25px;background:#ffffff;"></div>
<div class="t" style="left:1px;top:550px;width:80px;height:25px;line-height:25px;color:#fff;"><span class="c">德甲</span></div>
<div class="t" style="left:82px;top:550px;width:70px;height:25px;line-height:25px;">25-10-25</div>
<div class="t" style="left:153px;top:550px;width:151px;height:25px;line-height:25px;color:#1a7a1a;"><b class="bd">1</b><span class="c">门兴格拉德巴赫</span></div>
<div class="t" style="left:305px;top:550px;width:83px;height:25px;line-height:25px;"><span style="color:#cc1133">0-3</span>(0-0)</div>
<div class="t" style="left:389px;top:550px;width:35px;height:25px;line-height:25px;">1-8</div>
<div class="t" style="left:425px;top:550px;width:120px;height:25px;line-height:25px;"><span class="c">拜仁慕尼黑</span></div>
<div class="t" style="left:546px;top:550px;width:40px;height:25px;line-height:25px;">0.92</div>
<div class="t" style="left:587px;top:550px;width:87px;height:25px;line-height:25px;"><span class="c">受球半</span>/<span class="c">两</span></div>
<div class="t" style="left:675px;top:550px;width:41px;height:25px;line-height:25px;">0.96</div>
<div class="t" style="left:717px;top:550px;width:69px;height:25px;line-height:25px;">10.20</div>
<div class="t" style="left:787px;top:550px;width:56px;height:25px;line-height:25px;">6.89</div>
<div class="t" style="left:844px;top:550px;width:58px;height:25px;line-height:25px;">1.23</div>
<div class="t" style="left:903px;top:550px;width:34px;height:25px;line-height:25px;color:#1818a8;"><span class="c">负</span></div>
<div class="t" style="left:938px;top:550px;width:35px;height:25px;line-height:25px;color:#1818a8;"><span class="c">输</span></div>
<div class="t" style="left:974px;top:550px;width:53px;height:25px;line-height:25px;color:#1818a8;"><span class="c">小</span></div>
<div class="a" style="left:1px;top:575px;width:80px;height:25px;background:#990099;"></div>
<div class="a" style="left:82px;top:575px;width:70px;height:25px;background:#efefef;"></div>
<div class="a" style="left:153px;top:575px;width:151px;height:25px;background:#efefef;"></div>
<div class="a" style="left:305px;top:575px;width:83px;height:25px;background:#efefef;"></div>
<div class="a" style="left:389px;top:575px;width:35px;height:25px;background:#efefef;"></div>
<div class="a" style="left:425px;top:575px;width:120px;height:25px;background:#efefef;"></div>
<div class="a" style="left:546px;top:575px;width:40px;height:25px;background:#fdfaf8;"></div>
<div class="a" style="left:587px;top:575px;width:87px;height:25px;background:#fdfaf8;"></div>
<div class="a" style="left:675px;top:575px;width:41px;height:25px;background:#fdfaf8;"></div>
<div class="a" style="left:717px;top:575px;width:69px;height:25px;background:#eff7fc;"></div>
<div class="a" style="left:787px;top:575px;width:56px;height:25px;background:#eff7fc;"></div>
<div class="a" style="left:844px;top:575px;width:58px;height:25px;background:#eff7fc;"></div>
<div class="a" style="left:903px;top:575px;width:34px;height:25px;background:#efefef;"></div>
<div class="a" style="left:938px;top:575px;width:35px;height:25px;background:#efefef;"></div>
<div class="a" style="left:974px;top:575px;width:53px;height:25px;background:#efefef;"></div>
<div class="t" style="left:1px;top:576px;width:80px;height:25px;line-height:25px;color:#fff;"><span class="c">德甲</span></div>
<div class="t" style="left:82px;top:576px;width:70px;height:25px;line-height:25px;">25-10-18</div>
<div class="t" style="left:153px;top:576px;width:151px;height:25px;line-height:25px;"><span class="c">柏林联合</span></div>
<div class="t" style="left:305px;top:576px;width:83px;height:25px;line-height:25px;"><span style="color:#cc1133">3-1</span>(2-1)</div>
<div class="t" style="left:389px;top:576px;width:35px;height:25px;line-height:25px;">6-6</div>
<div class="t" style="left:425px;top:576px;width:120px;height:25px;line-height:25px;color:#1a7a1a;"><span class="c">门兴格拉德巴赫</span></div>
<div class="t" style="left:546px;top:576px;width:40px;height:25px;line-height:25px;">0.98</div>
<div class="t" style="left:587px;top:576px;width:87px;height:25px;line-height:25px;"><span class="c">平</span>/<span class="c">半</span></div>
<div class="t" style="left:675px;top:576px;width:41px;height:25px;line-height:25px;">0.90</div>
<div class="t" style="left:717px;top:576px;width:69px;height:25px;line-height:25px;">2.25</div>
<div class="t" style="left:787px;top:576px;width:56px;height:25px;line-height:25px;">3.38</div>
<div class="t" style="left:844px;top:576px;width:58px;height:25px;line-height:25px;">3.18</div>
<div class="t" style="left:903px;top:576px;width:34px;height:25px;line-height:25px;color:#1818a8;"><span class="c">负</span></div>
<div class="t" style="left:938px;top:576px;width:35px;height:25px;line-height:25px;color:#1818a8;"><span class="c">输</span></div>
<div class="t" style="left:974px;top:576px;width:53px;height:25px;line-height:25px;color:#e8200c;"><span class="c">大</span></div>
<div class="a" style="left:1px;top:601px;width:80px;height:25px;background:#00a3a3;"></div>
<div class="a" style="left:82px;top:601px;width:70px;height:25px;background:#ffffff;"></div>
<div class="a" style="left:153px;top:601px;width:151px;height:25px;background:#ffffff;"></div>
<div class="a" style="left:305px;top:601px;width:83px;height:25px;background:#ffffff;"></div>
<div class="a" style="left:389px;top:601px;width:35px;height:25px;background:#ffffff;"></div>
<div class="a" style="left:425px;top:601px;width:120px;height:25px;background:#ffffff;"></div>
<div class="a" style="left:546px;top:601px;width:40px;height:25px;background:#fdfaf8;"></div>
<div class="a" style="left:587px;top:601px;width:87px;height:25px;background:#fdfaf8;"></div>
<div class="a" style="left:675px;top:601px;width:41px;height:25px;background:#fdfaf8;"></div>
<div class="a" style="left:717px;top:601px;width:69px;height:25px;background:#eff7fc;"></div>
<div class="a" style="left:787px;top:601px;width:56px;height:25px;background:#eff7fc;"></div>
<div class="a" style="left:844px;top:601px;width:58px;height:25px;background:#eff7fc;"></div>
<div class="a" style="left:903px;top:601px;width:34px;height:25px;background:#ffffff;"></div>
<div class="a" style="left:938px;top:601px;width:35px;height:25px;background:#ffffff;"></div>
<div class="a" style="left:974px;top:601px;width:53px;height:25px;background:#ffffff;"></div>
<div class="t" style="left:1px;top:602px;width:80px;height:25px;line-height:25px;color:#fff;"><span class="c">球会友谊</span></div>
<div class="t" style="left:82px;top:602px;width:70px;height:25px;line-height:25px;">25-10-10</div>
<div class="t" style="left:153px;top:602px;width:151px;height:25px;line-height:25px;color:#1a7a1a;"><span class="c">门兴格拉德巴赫</span>(<span class="c">中</span>)</div>
<div class="t" style="left:305px;top:602px;width:83px;height:25px;line-height:25px;"><span style="color:#cc1133">3-2</span>(1-1)</div>
<div class="t" style="left:389px;top:602px;width:35px;height:25px;line-height:25px;">1-5</div>
<div class="t" style="left:425px;top:602px;width:120px;height:25px;line-height:25px;"><span class="c">普鲁士明斯特</span></div>
<div class="t" style="left:546px;top:602px;width:40px;height:25px;line-height:25px;">0.94</div>
<div class="t" style="left:587px;top:602px;width:87px;height:25px;line-height:25px;"><span class="c">半球</span></div>
<div class="t" style="left:675px;top:602px;width:41px;height:25px;line-height:25px;">0.88</div>
<div class="t" style="left:717px;top:602px;width:69px;height:25px;line-height:25px;">1.94</div>
<div class="t" style="left:787px;top:602px;width:56px;height:25px;line-height:25px;">3.68</div>
<div class="t" style="left:844px;top:602px;width:58px;height:25px;line-height:25px;">3.35</div>
<div class="t" style="left:903px;top:602px;width:34px;height:25px;line-height:25px;color:#e8200c;"><span class="c">胜</span></div>
<div class="t" style="left:938px;top:602px;width:35px;height:25px;line-height:25px;color:#e8200c;"><span class="c">赢</span></div>
<div class="t" style="left:974px;top:602px;width:53px;height:25px;line-height:25px;color:#e8200c;"><span class="c">大</span></div>
<div class="a" style="left:1px;top:627px;width:80px;height:25px;background:#990099;"></div>
<div class="a" style="left:82px;top:627px;width:70px;height:25px;background:#efefef;"></div>
<div class="a" style="left:153px;top:627px;width:151px;height:25px;background:#efefef;"></div>
<div class="a" style="left:305px;top:627px;width:83px;height:25px;background:#efefef;"></div>
<div class="a" style="left:389px;top:627px;width:35px;height:25px;background:#efefef;"></div>
<div class="a" style="left:425px;top:627px;width:120px;height:25px;background:#efefef;"></div>
<div class="a" style="left:546px;top:627px;width:40px;height:25px;background:#fdfaf8;"></div>
<div class="a" style="left:587px;top:627px;width:87px;height:25px;background:#fdfaf8;"></div>
<div class="a" style="left:675px;top:627px;width:41px;height:25px;background:#fdfaf8;"></div>
<div class="a" style="left:717px;top:627px;width:69px;height:25px;background:#eff7fc;"></div>
<div class="a" style="left:787px;top:627px;width:56px;height:25px;background:#eff7fc;"></div>
<div class="a" style="left:844px;top:627px;width:58px;height:25px;background:#eff7fc;"></div>
<div class="a" style="left:903px;top:627px;width:34px;height:25px;background:#efefef;"></div>
<div class="a" style="left:938px;top:627px;width:35px;height:25px;background:#efefef;"></div>
<div class="a" style="left:974px;top:627px;width:53px;height:25px;background:#efefef;"></div>
<div class="t" style="left:1px;top:628px;width:80px;height:25px;line-height:25px;color:#fff;"><span class="c">德甲</span></div>
<div class="t" style="left:82px;top:628px;width:70px;height:25px;line-height:25px;">25-10-06</div>
<div class="t" style="left:153px;top:628px;width:151px;height:25px;line-height:25px;color:#1a7a1a;"><span class="c">门兴格拉德巴赫</span></div>
<div class="t" style="left:305px;top:628px;width:83px;height:25px;line-height:25px;"><span style="color:#cc1133">0-0</span>(0-0)</div>
<div class="t" style="left:389px;top:628px;width:35px;height:25px;line-height:25px;">4-1</div>
<div class="t" style="left:425px;top:628px;width:120px;height:25px;line-height:25px;"><span class="c">弗赖堡</span></div>
<div class="t" style="left:546px;top:628px;width:40px;height:25px;line-height:25px;">0.94</div>
<div class="t" style="left:587px;top:628px;width:87px;height:25px;line-height:25px;"><span class="c">平手</span></div>
<div class="t" style="left:675px;top:628px;width:41px;height:25px;line-height:25px;">0.94</div>
<div class="t" style="left:717px;top:628px;width:69px;height:25px;line-height:25px;">2.58</div>
<div class="t" style="left:787px;top:628px;width:56px;height:25px;line-height:25px;">3.37</div>
<div class="t" style="left:844px;top:628px;width:58px;height:25px;line-height:25px;">2.70</div>
<div class="t" style="left:903px;top:628px;width:34px;height:25px;line-height:25px;color:#1a7a1a;"><span class="c">平</span></div>
<div class="t" style="left:938px;top:628px;width:35px;height:25px;line-height:25px;color:#1a7a1a;"><span class="c">走</span></div>
<div class="t" style="left:974px;top:628px;width:53px;height:25px;line-height:25px;color:#1818a8;"><span class="c">小</span></div>
<div class="a" style="left:1px;top:653px;width:80px;height:25px;background:#990099;"></div>
<div class="a" style="left:82px;top:653px;width:70px;height:25px;background:#ffffff;"></div>
<div class="a" style="left:153px;top:653px;width:151px;height:25px;background:#ffffff;"></div>
<div class="a" style="left:305px;top:653px;width:83px;height:25px;background:#ffffff;"></div>
<div class="a" style="left:389px;top:653px;width:35px;height:25px;background:#ffffff;"></div>
<div class="a" style="left:425px;top:653px;width:120px;height:25px;background:#ffffff;"></div>
<div class="a" style="left:546px;top:653px;width:40px;height:25px;background:#fdfaf8;"></div>
<div class="a" style="left:587px;top:653px;width:87px;height:25px;background:#fdfaf8;"></div>
<div class="a" style="left:675px;top:653px;width:41px;height:25px;background:#fdfaf8;"></div>
<div class="a" style="left:717px;top:653px;width:69px;height:25px;background:#eff7fc;"></div>
<div class="a" style="left:787px;top:653px;width:56px;height:25px;background:#eff7fc;"></div>
<div class="a" style="left:844px;top:653px;width:58px;height:25px;background:#eff7fc;"></div>
<div class="a" style="left:903px;top:653px;width:34px;height:25px;background:#ffffff;"></div>
<div class="a" style="left:938px;top:653px;width:35px;height:25px;background:#ffffff;"></div>
<div class="a" style="left:974px;top:653px;width:53px;height:25px;background:#ffffff;"></div>
<div class="t" style="left:1px;top:654px;width:80px;height:25px;line-height:25px;color:#fff;"><span class="c">德甲</span></div>
<div class="t" style="left:82px;top:654px;width:70px;height:25px;line-height:25px;">25-09-28</div>
<div class="t" style="left:153px;top:654px;width:151px;height:25px;line-height:25px;color:#1a7a1a;"><span class="c">门兴格拉德巴赫</span></div>
<div class="t" style="left:305px;top:654px;width:83px;height:25px;line-height:25px;"><span style="color:#cc1133">4-6</span>(0-5)</div>
<div class="t" style="left:389px;top:654px;width:35px;height:25px;line-height:25px;">4-6</div>
<div class="t" style="left:425px;top:654px;width:120px;height:25px;line-height:25px;"><span class="c">法兰克福</span></div>
<div class="t" style="left:546px;top:654px;width:40px;height:25px;line-height:25px;">0.83</div>
<div class="t" style="left:587px;top:654px;width:87px;height:25px;line-height:25px;"><span class="c">受平</span>/<span class="c">半</span></div>
<div class="t" style="left:675px;top:654px;width:41px;height:25px;line-height:25px;">1.05</div>
<div class="t" style="left:717px;top:654px;width:69px;height:25px;line-height:25px;">2.92</div>
<div class="t" style="left:787px;top:654px;width:56px;height:25px;line-height:25px;">3.64</div>
<div class="t" style="left:844px;top:654px;width:58px;height:25px;line-height:25px;">2.29</div>
<div class="t" style="left:903px;top:654px;width:34px;height:25px;line-height:25px;color:#1818a8;"><span class="c">负</span></div>
<div class="t" style="left:938px;top:654px;width:35px;height:25px;line-height:25px;color:#1818a8;"><span class="c">输</span></div>
<div class="t" style="left:974px;top:654px;width:53px;height:25px;line-height:25px;color:#e8200c;"><span class="c">大</span></div>
<div class="a" style="left:1px;top:679px;width:80px;height:25px;background:#990099;"></div>
<div class="a" style="left:82px;top:679px;width:70px;height:25px;background:#efefef;"></div>
<div class="a" style="left:153px;top:679px;width:151px;height:25px;background:#efefef;"></div>
<div class="a" style="left:305px;top:679px;width:83px;height:25px;background:#efefef;"></div>
<div class="a" style="left:389px;top:679px;width:35px;height:25px;background:#efefef;"></div>
<div class="a" style="left:425px;top:679px;width:120px;height:25px;background:#efefef;"></div>
<div class="a" style="left:546px;top:679px;width:40px;height:25px;background:#fdfaf8;"></div>
<div class="a" style="left:587px;top:679px;width:87px;height:25px;background:#fdfaf8;"></div>
<div class="a" style="left:675px;top:679px;width:41px;height:25px;background:#fdfaf8;"></div>
<div class="a" style="left:717px;top:679px;width:69px;height:25px;background:#eff7fc;"></div>
<div class="a" style="left:787px;top:679px;width:56px;height:25px;background:#eff7fc;"></div>
<div class="a" style="left:844px;top:679px;width:58px;height:25px;background:#eff7fc;"></div>
<div class="a" style="left:903px;top:679px;width:34px;height:25px;background:#efefef;"></div>
<div class="a" style="left:938px;top:679px;width:35px;height:25px;background:#efefef;"></div>
<div class="a" style="left:974px;top:679px;width:53px;height:25px;background:#efefef;"></div>
<div class="t" style="left:1px;top:680px;width:80px;height:25px;line-height:25px;color:#fff;"><span class="c">德甲</span></div>
<div class="t" style="left:82px;top:680px;width:70px;height:25px;line-height:25px;">25-09-21</div>
<div class="t" style="left:153px;top:680px;width:151px;height:25px;line-height:25px;"><span class="c">勤沃库森</span></div>
<div class="t" style="left:305px;top:680px;width:83px;height:25px;line-height:25px;"><span style="color:#cc1133">1-1</span>(0-0)</div>
<div class="t" style="left:389px;top:680px;width:35px;height:25px;line-height:25px;">3-4</div>
<div class="t" style="left:425px;top:680px;width:120px;height:25px;line-height:25px;color:#1a7a1a;"><span class="c">门兴格拉德巴赫</span></div>
<div class="t" style="left:546px;top:680px;width:40px;height:25px;line-height:25px;">0.81</div>
<div class="t" style="left:587px;top:680px;width:87px;height:25px;line-height:25px;"><span class="c">一球</span></div>
<div class="t" style="left:675px;top:680px;width:41px;height:25px;line-height:25px;">1.07</div>
<div class="t" style="left:717px;top:680px;width:69px;height:25px;line-height:25px;">1.54</div>
<div class="t" style="left:787px;top:680px;width:56px;height:25px;line-height:25px;">4.52</div>
<div class="t" style="left:844px;top:680px;width:58px;height:25px;line-height:25px;">5.44</div>
<div class="t" style="left:903px;top:680px;width:34px;height:25px;line-height:25px;color:#1a7a1a;"><span class="c">平</span></div>
<div class="t" style="left:938px;top:680px;width:35px;height:25px;line-height:25px;color:#e8200c;"><span class="c">赢</span></div>
<div class="t" style="left:974px;top:680px;width:53px;height:25px;line-height:25px;color:#1818a8;"><span class="c">小</span></div>
<div class="a" style="left:81px;top:445px;width:1px;height:25px;background:#cceded;"></div>
<div class="a" style="left:0px;top:445px;width:1px;height:25px;background:#99dada;"></div>
<div class="a" style="left:1px;top:470px;width:80px;height:1px;background:#a6a8ce;"></div>
<div class="a" style="left:1px;top:445px;width:80px;height:25px;box-shadow:inset -1px -1px 0 rgba(0,0,0,0.18), inset 0 1px 0 rgba(0,0,0,0.12);"></div>
<div class="a" style="left:81px;top:471px;width:1px;height:25px;background:#ebcceb;"></div>
<div class="a" style="left:0px;top:471px;width:1px;height:25px;background:#d699d6;"></div>
<div class="a" style="left:1px;top:496px;width:80px;height:1px;background:#cc80cc;"></div>
<div class="a" style="left:1px;top:471px;width:80px;height:25px;box-shadow:inset -1px -1px 0 rgba(0,0,0,0.18), inset 0 1px 0 rgba(0,0,0,0.12);"></div>
<div class="a" style="left:81px;top:497px;width:1px;height:25px;background:#ebcceb;"></div>
<div class="a" style="left:0px;top:497px;width:1px;height:25px;background:#d699d6;"></div>
<div class="a" style="left:1px;top:522px;width:80px;height:1px;background:#ce80a7;"></div>
<div class="a" style="left:1px;top:497px;width:80px;height:25px;box-shadow:inset -1px -1px 0 rgba(0,0,0,0.18), inset 0 1px 0 rgba(0,0,0,0.12);"></div>
<div class="a" style="left:81px;top:523px;width:1px;height:25px;background:#edcdcd;"></div>
<div class="a" style="left:0px;top:523px;width:1px;height:25px;background:#da9b9b;"></div>
<div class="a" style="left:1px;top:548px;width:80px;height:1px;background:#ce80a7;"></div>
<div class="a" style="left:1px;top:523px;width:80px;height:25px;box-shadow:inset -1px -1px 0 rgba(0,0,0,0.18), inset 0 1px 0 rgba(0,0,0,0.12);"></div>
<div class="a" style="left:81px;top:549px;width:1px;height:25px;background:#ebcceb;"></div>
<div class="a" style="left:0px;top:549px;width:1px;height:25px;background:#d699d6;"></div>
<div class="a" style="left:1px;top:574px;width:80px;height:1px;background:#cc80cc;"></div>
<div class="a" style="left:1px;top:549px;width:80px;height:25px;box-shadow:inset -1px -1px 0 rgba(0,0,0,0.18), inset 0 1px 0 rgba(0,0,0,0.12);"></div>
<div class="a" style="left:81px;top:575px;width:1px;height:25px;background:#ebcceb;"></div>
<div class="a" style="left:0px;top:575px;width:1px;height:25px;background:#d699d6;"></div>
<div class="a" style="left:1px;top:600px;width:80px;height:1px;background:#a6a8ce;"></div>
<div class="a" style="left:1px;top:575px;width:80px;height:25px;box-shadow:inset -1px -1px 0 rgba(0,0,0,0.18), inset 0 1px 0 rgba(0,0,0,0.12);"></div>
<div class="a" style="left:81px;top:601px;width:1px;height:25px;background:#cceded;"></div>
<div class="a" style="left:0px;top:601px;width:1px;height:25px;background:#99dada;"></div>
<div class="a" style="left:1px;top:626px;width:80px;height:1px;background:#a6a8ce;"></div>
<div class="a" style="left:1px;top:601px;width:80px;height:25px;box-shadow:inset -1px -1px 0 rgba(0,0,0,0.18), inset 0 1px 0 rgba(0,0,0,0.12);"></div>
<div class="a" style="left:81px;top:627px;width:1px;height:25px;background:#ebcceb;"></div>
<div class="a" style="left:0px;top:627px;width:1px;height:25px;background:#d699d6;"></div>
<div class="a" style="left:1px;top:652px;width:80px;height:1px;background:#cc80cc;"></div>
<div class="a" style="left:1px;top:627px;width:80px;height:25px;box-shadow:inset -1px -1px 0 rgba(0,0,0,0.18), inset 0 1px 0 rgba(0,0,0,0.12);"></div>
<div class="a" style="left:81px;top:653px;width:1px;height:25px;background:#ebcceb;"></div>
<div class="a" style="left:0px;top:653px;width:1px;height:25px;background:#d699d6;"></div>
<div class="a" style="left:1px;top:678px;width:80px;height:1px;background:#cc80cc;"></div>
<div class="a" style="left:1px;top:653px;width:80px;height:25px;box-shadow:inset -1px -1px 0 rgba(0,0,0,0.18), inset 0 1px 0 rgba(0,0,0,0.12);"></div>
<div class="a" style="left:81px;top:679px;width:1px;height:25px;background:#ebcceb;"></div>
<div class="a" style="left:0px;top:679px;width:1px;height:25px;background:#d699d6;"></div>
<div class="a" style="left:1px;top:704px;width:80px;height:1px;background:#e6bfe6;"></div>
<div class="a" style="left:1px;top:679px;width:80px;height:25px;box-shadow:inset -1px -1px 0 rgba(0,0,0,0.18), inset 0 1px 0 rgba(0,0,0,0.12);"></div>
<div class="a" style="left:1px;top:705px;width:1026px;height:25px;background:#ffffff;"></div>
<div class="t" style="left:1px;top:706px;width:1026px;height:25px;line-height:25px;letter-spacing:0.22px;"><span class="c">近</span><span style="color:#cc1133">10</span><span class="c">场</span>,<span class="c">胜</span>5<span class="c">平</span>2<span class="c">负</span>3, <span class="c">胜率</span>:<span style="color:#cc1133">50%</span> <span class="c">让胜率</span>:<span style="color:#cc1133">50%</span> <span class="c">大率</span>:<span style="color:#cc1133">60%</span> <span class="c">单率</span>:<span style="color:#cc1133">30%</span></div>
<div class="a" style="left:0px;top:731px;width:1028px;height:1px;background:#ffffff;"></div>
</body></html>
